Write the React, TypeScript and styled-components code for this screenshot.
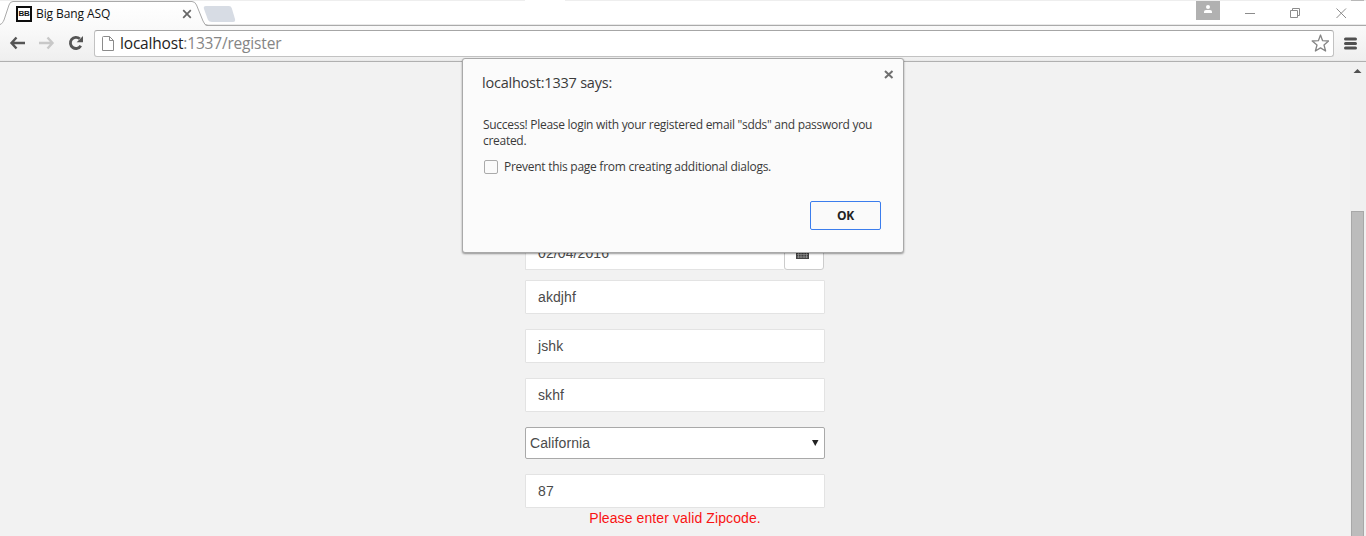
import React from "react";
import styled, { createGlobalStyle } from "styled-components";

const Global = createGlobalStyle`
  * { box-sizing: border-box; }
  html, body { margin: 0; height: 536px; overflow: hidden; background: #f2f2f2; }
  svg { display: block; flex: none; }
`;

const Window = styled.div`
  position: relative;
  width: 1366px;
  height: 536px;
  display: flex;
  flex-direction: column;
  overflow: hidden;
  font-family: "Open Sans", sans-serif;
`;

const TabStrip = styled.div`
  position: relative;
  height: 26px;
  flex: none;
  display: flex;
  background: linear-gradient(#fff 24px, #e9e9e9 24px, #e9e9e9 25px, #aaa 25px);
`;

const TopEdge = styled.div<{ $from: number; $width: number; $tone: string }>`
  position: absolute;
  top: 0;
  left: ${(p) => p.$from}px;
  width: ${(p) => p.$width}px;
  height: 1px;
  background: ${(p) => p.$tone};
`;

const TabShape = styled.svg`
  position: absolute;
  left: 0;
  top: 0;
`;

const Tab = styled.div`
  position: relative;
  width: 240px;
  height: 26px;
  display: flex;
  align-items: center;
  padding: 2px 0 0 16px;
`;

const Favicon = styled.div`
  width: 16px;
  height: 16px;
  border: 2px solid #0c0c0c;
  background: #fff;
  color: #111;
  font: bold 8px/12px "Liberation Sans", sans-serif;
  letter-spacing: -0.3px;
  display: flex;
  justify-content: center;
`;

const TabTitle = styled.span`
  width: 142px;
  margin-left: 4px;
  margin-right: 4px;
  font-size: 12px;
  line-height: 16px;
  letter-spacing: -0.1px;
  color: #111;
  white-space: nowrap;
`;

const WindowControls = styled.div`
  position: relative;
  display: flex;
  margin-left: auto;
  width: 170px;
`;

const UserBadge = styled.div`
  width: 24px;
  height: 19px;
  margin-top: 1px;
  background: #b1b1b1;
`;

const Toolbar = styled.div`
  height: 36px;
  flex: none;
  display: flex;
  align-items: center;
  padding: 0 8px 1px 8px;
  background: linear-gradient(#fafafa, #efefef 34px, #e4e4e4);
  border-bottom: 1px solid #b0b0b0;
`;

const Omnibox = styled.div`
  width: 1240px;
  height: 27px;
  margin-left: 8px;
  padding: 0 4px 0 7px;
  display: flex;
  align-items: center;
  background: #fff;
  border: 1px solid #c2c2c2;
  border-top-color: #a6a6a6;
  border-radius: 3px;
`;

const Url = styled.span`
  flex: 1;
  margin-left: 6px;
  font-size: 15.5px;
  line-height: 22px;
  letter-spacing: -0.18px;
  color: #222;
  white-space: nowrap;
`;

const UrlRest = styled.span`
  color: #858585;
`;

const Viewport = styled.div`
  flex: 1;
  display: flex;
  min-height: 0;
  background: #f2f2f2;
`;

const Page = styled.main`
  flex: 1;
  padding: 174px 0 0 525px;
  font-family: "Liberation Sans", Arial, sans-serif;
  font-size: 14px;
  letter-spacing: 0.1px;
  color: #4a4a4a;
`;

const Form = styled.form`
  width: 300px;
  display: flex;
  flex-direction: column;
`;

const Field = styled.div<{ $gap?: number }>`
  height: 34px;
  margin-bottom: ${(p) => p.$gap ?? 15}px;
  padding: 0 12px;
  line-height: 32px;
  background: #fff;
  border: 1px solid #e3e3e3;
  border-radius: 1px;
`;

const DateRow = styled.div`
  display: flex;
  margin-bottom: 10px;
`;

const DateField = styled(Field)`
  width: 259px;
  margin: 0;
  border-right: 0;
`;

const DateButton = styled.div`
  width: 40px;
  height: 34px;
  display: flex;
  align-items: center;
  padding-left: 11px;
  background: #fff;
  border: 1px solid #ccc;
  border-radius: 0 3px 3px 3px;
`;

const SelectBox = styled.div`
  height: 32px;
  margin-bottom: 15px;
  padding: 0 5px 0 4px;
  display: flex;
  align-items: center;
  justify-content: space-between;
  background: #fff;
  border: 1px solid #a9a9a9;
  border-radius: 2px;
`;

const ErrorText = styled.div`
  line-height: 20px;
  text-align: center;
  color: #f91313;
`;

const ScrollTrack = styled.div`
  width: 16px;
  background: #f0f0f0;
  padding: 6px 2px 0 1px;
`;

const ScrollThumb = styled.div`
  height: 340px;
  margin-top: 137px;
  background: #bcbcbc;
  border: 1px solid #a8a8a8;
`;

const Dialog = styled.section`
  position: absolute;
  left: 462px;
  top: 58px;
  width: 442px;
  height: 195px;
  padding: 14px 22px 22px 20px;
  display: flex;
  flex-direction: column;
  background: #fbfbfb;
  border: 1px solid #a9a9a9;
  border-radius: 3px;
  box-shadow: 0 1px 2px rgba(0, 0, 0, 0.4);
  color: #3a3a3a;
`;

const DialogTitle = styled.h1`
  margin: 0 0 24px -1px;
  font-size: 14.5px;
  line-height: 20px;
  font-weight: 400;
  letter-spacing: -0.22px;
`;

const Message = styled.p`
  margin: 0 0 10px;
  font-size: 12px;
  line-height: 16px;
  letter-spacing: -0.29px;
  white-space: nowrap;
`;

const CheckRow = styled.label`
  display: flex;
  align-items: center;
  font-size: 12px;
  line-height: 16px;
  letter-spacing: -0.27px;
  white-space: nowrap;
`;

const Checkbox = styled.span`
  width: 14px;
  height: 14px;
  margin: 0 6px 0 1px;
  border: 1px solid #aaa;
  border-radius: 2px;
  background: #fafafa;
`;

const OkButton = styled.button`
  width: 71px;
  height: 29px;
  margin: auto 0 0 auto;
  padding: 0;
  border: 1px solid #3b7ded;
  border-radius: 2px;
  background: #fafafa;
  color: #222;
  font: bold 12px "Open Sans", sans-serif;
  letter-spacing: -0.2px;
`;

const DialogClose = styled.svg`
  position: absolute;
  right: 9px;
  top: 11px;
`;

export default function App() {
  return (
    <Window>
      <Global />
      <TabStrip>
        <TopEdge $from={0} $width={525} $tone="#eeeeee" />
        <TopEdge $from={565} $width={801} $tone="#eeeeee" />
        <TopEdge $from={1351} $width={13} $tone="#b8b8b8" />
        <TabShape width="245" height="26">
          <defs>
            <linearGradient id="tabFill" x1="0" y1="0" x2="0" y2="1">
              <stop offset="0" stopColor="#fff" />
              <stop offset="1" stopColor="#fafafa" />
            </linearGradient>
          </defs>
          <path d="M0 26V25C2 24 3 23 4 20L9 5Q10 1.5 13 1.5H192Q195 1.5 196.500 5L203 22Q204.500 25.500 207 26Z" fill="url(#tabFill)" />
          <path d="M0 24.500C2 24 3 22 4 20L9 5Q10 1.500 13 1.500H192Q195 1.500 196.500 5L203 21Q204.500 25.500 208 25.500" fill="none" stroke="#a9a9a9" />
          <path d="M206 6H229Q231 6 231.700 8L235 19Q235.700 22 233 22H212Q209 22 208 20L204 9Q203 6 206 6Z" fill="#d7dce4" />
        </TabShape>
        <Tab>
          <Favicon>BB</Favicon>
          <TabTitle>Big Bang ASQ</TabTitle>
          <svg width="10" height="10"><path d="M1.200 1.200L8.800 8.800M8.800 1.200L1.200 8.800" stroke="#666" strokeWidth="1.700" /></svg>
        </Tab>
        <WindowControls>
          <UserBadge>
            <svg width="24" height="19"><circle cx="12" cy="6" r="2" fill="#fff" /><path d="M8 12V10.500Q8 9 10 9H14Q16 9 16 10.500V12Z" fill="#fff" /></svg>
          </UserBadge>
          <svg width="146" height="25" fill="none" stroke="#8c8c8c">
            <path d="M25 13.500H35" />
            <path d="M70.500 10.500H77.500V17.500H70.500ZM72.500 10V8.500H79.500V15.500H78" />
            <path d="M116.500 8.500L126 18M126 8.500L116.500 18" />
          </svg>
        </WindowControls>
      </TabStrip>
      <Toolbar>
        <svg width="78" height="28" fill="none" strokeWidth="2.400">
          <path d="M3 14H17M8.500 8.500L3.500 14L8.500 19.500" stroke="#555" />
          <path d="M31 14H44M39.500 8.500L44.500 14L39.500 19.500" stroke="#c8c8c8" />
          <path d="M71.800 9.800A5.600 5.600 0 1 0 72.800 16.800" stroke="#555" strokeWidth="2.800" />
          <path d="M75 7V13.300H68.700Z" fill="#555" />
        </svg>
        <Omnibox>
          <svg width="12" height="16" fill="none" stroke="#8b8b8b"><path d="M0.500 2.500Q.5 1.500 1.500 1.500H7.500L11.500 5.500V15.500H.5ZM7.500 1.500V5.500H11.500" /></svg>
          <Url>localhost<UrlRest>:1337/register</UrlRest></Url>
          <svg width="18" height="18" viewBox="0 0 18 18" fill="#fff" stroke="#858585" strokeWidth="1.300" strokeLinejoin="round">
            <path d="M9.500 1L11.600 6.700L17.600 7L13 11L14.600 17L9.500 13.900L4.400 17L6 11L1.200 7L7.400 6.700Z" />
          </svg>
        </Omnibox>
        <svg width="24" height="28"><path d="M11.500 10H21.500M11.500 14.500H21.500M11.500 19H21.500" stroke="#505050" strokeWidth="3" strokeLinecap="round" /></svg>
      </Toolbar>
      <Viewport>
        <Page>
          <Form>
            <DateRow>
              <DateField>02/04/2016</DateField>
              <DateButton>
                <svg width="14" height="14"><path d="M0 1H13V13H0Z" fill="#444" /><path d="M1 5.500H12M1 8.500H12M1 11H12M2.500 4V12M5 4V12M8 4V12M10.500 4V12" stroke="#aaa" strokeWidth=".6" /></svg>
              </DateButton>
            </DateRow>
            <Field>akdjhf</Field>
            <Field>jshk</Field>
            <Field>skhf</Field>
            <SelectBox>
              California
              <svg width="8" height="8"><path d="M1 1H7.500L4.250 7Z" fill="#222" /></svg>
            </SelectBox>
            <Field $gap={0}>87</Field>
            <ErrorText>Please enter valid Zipcode.</ErrorText>
          </Form>
        </Page>
        <ScrollTrack>
          <svg width="13" height="6"><path d="M2.500 5L6.500 1L10.500 5Z" fill="#505050" /></svg>
          <ScrollThumb />
        </ScrollTrack>
      </Viewport>
      <Dialog>
        <DialogTitle>localhost:1337 says:</DialogTitle>
        <Message>
          Success! Please login with your registered email "sdds" and password you
          <br />
          created.
        </Message>
        <CheckRow><Checkbox />Prevent this page from creating additional dialogs.</CheckRow>
        <OkButton type="button">OK</OkButton>
        <DialogClose width="10" height="9"><path d="M1 1L8.500 8M8.500 1L1 8" stroke="#707070" strokeWidth="2" /></DialogClose>
      </Dialog>
    </Window>
  );
}
